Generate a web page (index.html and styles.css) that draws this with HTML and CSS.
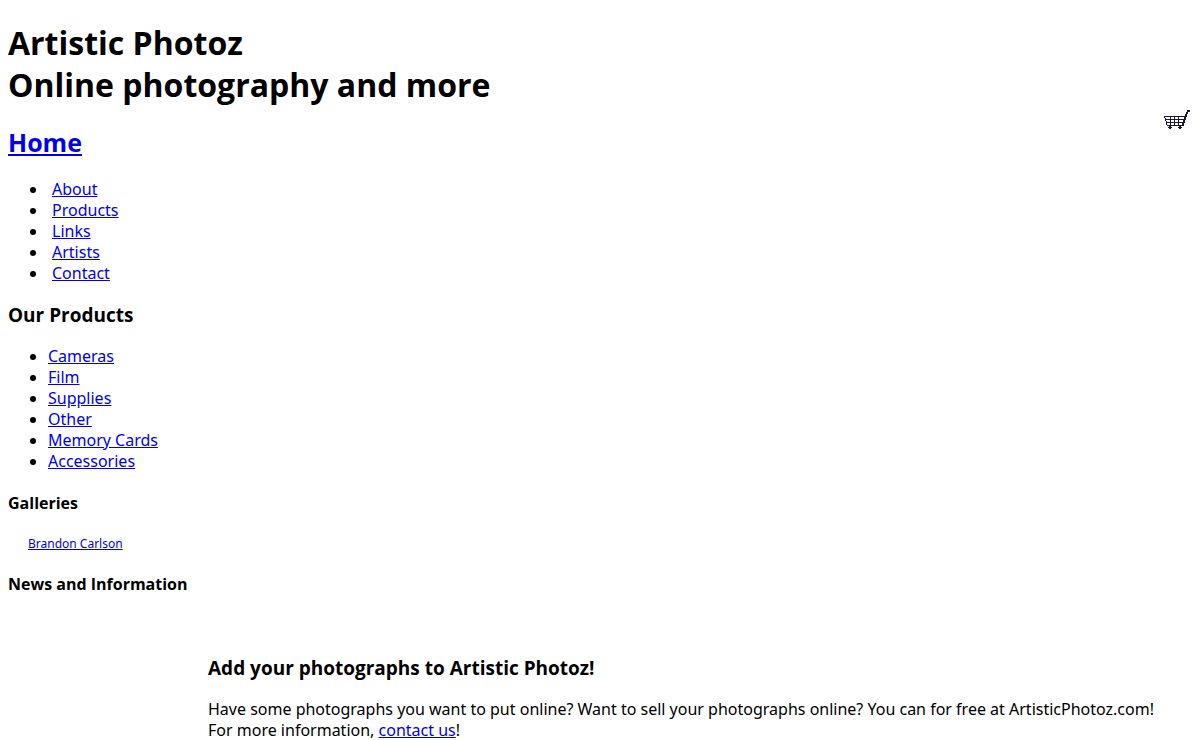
FILE: index.html
```
<!DOCTYPE html>
<html lang="en">
<head>
    <meta charset="UTF-8">
    <title>Artistic Photoz</title>
    <link rel="stylesheet" href="styles.css">
</head>
<body>

    <div class="header">
        <h1>Artistic Photoz<br>Online photography and more</h1>
    </div>

    <div class="top">
        <div class="nav">
            <h2><a href="#home">Home</a></h2>
            <ul>
                <li><a href="#about">About</a></li>
                <li><a href="#products">Products</a></li>
                <li><a href="#links">Links</a></li>
                <li><a href="#artists">Artists</a></li>
                <li><a href="#contact">Contact</a></li>
            </ul>
        </div>
        <a class="cart" href="#cart" aria-label="Shopping cart">
            <svg width="28" height="20" viewBox="0 0 28 20" fill="#1c1838" shape-rendering="crispEdges">
                <!-- handle -->
                <path d="M23 0h3v2h-3zM22 2h2v2h-2zM21 4h2v3h-2zM20 7h2v3h-2zM19 10h2v3h-2zM18 13h2v3h-2z"/>
                <!-- basket -->
                <path d="M0 6h22v1H0zM1 9h20v1H1zM2 12h18v1H2zM3 15h17v1H3z"/>
                <path d="M0 6h1v2H0zM1 8h1v3H1zM2 11h1v4H2zM6 6h1v10H6zM10 6h1v10h-1zM14 6h1v10h-1z"/>
                <!-- wheels -->
                <path d="M5 16h2v1H5zM4 17h4v1H4zM5 18h2v1H5zM15 16h2v1h-2zM14 17h4v1h-4zM15 18h2v1h-2z"/>
            </svg>
        </a>
    </div>

    <div class="products">
        <h3>Our Products</h3>
        <ul>
            <li><a href="#cameras">Cameras</a></li>
            <li><a href="#film">Film</a></li>
            <li><a href="#supplies">Supplies</a></li>
            <li><a href="#other">Other</a></li>
            <li><a href="#memory">Memory Cards</a></li>
            <li><a href="#accessories">Accessories</a></li>
        </ul>
        <h4>Galleries</h4>
        <p class="gallery"><a href="#carlson">Brandon Carlson</a></p>
        <h4>News and Information</h4>
    </div>

    <div class="content">
        <h3>Add your photographs to Artistic Photoz!</h3>
        <p>Have some photographs you want to put online? Want to sell your photographs online? You can for free at ArtisticPhotoz.com! For more information, <a href="#contact">contact us</a>!</p>
    </div>

</body>
</html>
```
FILE: styles.css
```
body {
    margin: 8px;
    font-family: "Noto Sans", sans-serif;
    font-size: 16px;
    line-height: 21px;
    color: #000;
    background-color: #fff;
}
h1, h2, h3, h4 {
    font-family: "Open Sans", sans-serif;
}
.header {
    padding-top: 14px;
}
h1 {
    margin: 0;
    font-size: 32px;
    line-height: 42px;
}
h2 {
    margin: 16px 0 21px;
    font-size: 25px;
    line-height: 32px;
}
h3 {
    margin: 19px 0;
    font-size: 19px;
    line-height: 24px;
}
h4 {
    margin: 21px 0;
}
ul {
    margin: 0;
    padding-left: 40px;
}
p {
    margin: 0;
}
a {
    color: #0000ee;
}
.top {
    display: flex;
    justify-content: space-between;
    align-items: flex-start;
    margin-top: 4px;
}
.cart svg {
    display: block;
}
.nav li {
    padding-left: 4px;
}
.gallery {
    margin: 22px 20px;
    font-size: 12px;
    line-height: 16px;
}
.content {
    margin: 61px 20px 0 200px;
}
```
